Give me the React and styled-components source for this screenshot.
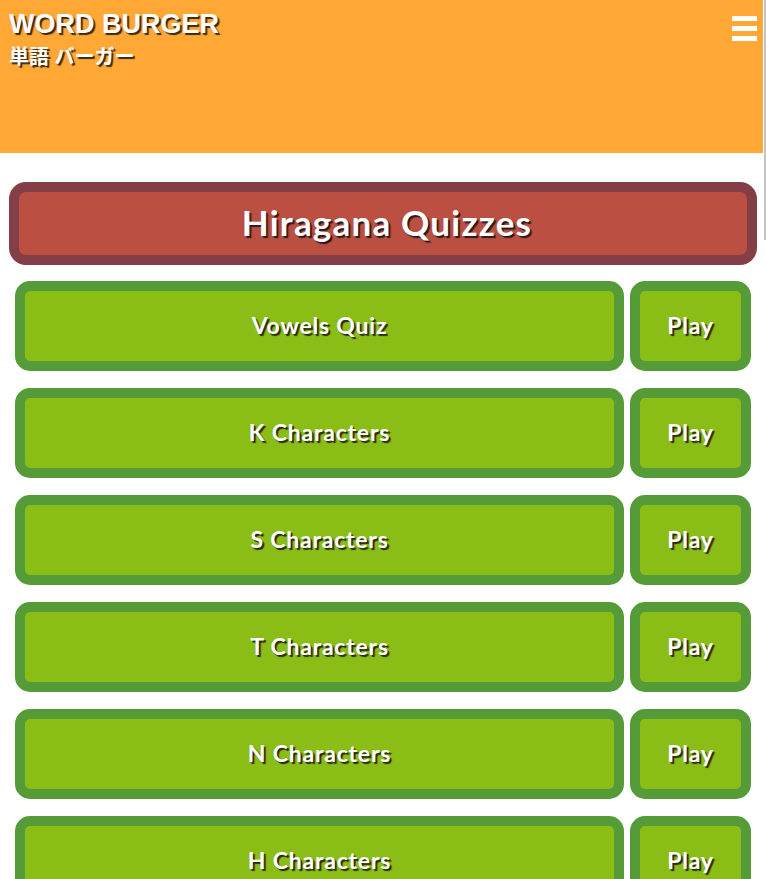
import React from "react";
import styled, { createGlobalStyle } from "styled-components";

const Global = createGlobalStyle`
  html, body { margin: 0; padding: 0; background: #ffffff; }
  body { font-family: "Liberation Sans", Arial, sans-serif; }
  * { box-sizing: border-box; }
`;

const Header = styled.header`
  height: 153px;
  width: 763px;
  background: #ffa836;
  display: flex;
  justify-content: space-between;
  align-items: flex-start;
  padding: 9px 6px 0 9px;
`;

const Brand = styled.div`
  display: flex;
  flex-direction: column;
  color: #ffffff;
  font-weight: 700;
  text-shadow: 2px 2px 1px #3a2a10;
`;

const Title = styled.div`
  font-family: "Liberation Sans", Arial, sans-serif;
  font-size: 27px;
  line-height: 30px;
`;

const Subtitle = styled.div`
  font-family: "Liberation Sans", "Noto Sans CJK JP", sans-serif;
  font-size: 20px;
  line-height: 26px;
  margin-top: 5px;
`;

const Burger = styled.button`
  display: flex;
  flex-direction: column;
  gap: 5px;
  margin-top: 7px;
  padding: 0;
  border: 0;
  background: transparent;
`;

const Bar = styled.span`
  display: block;
  width: 25px;
  height: 5px;
  background: #ffffff;
`;

const Main = styled.main`
  display: flex;
  flex-direction: column;
  padding: 29px 9px 0 9px;
  width: 766px;
`;

const Banner = styled.div`
  width: 748px;
  height: 83px;
  border: 10px solid #843f46;
  border-radius: 17px;
  background: #bb4f42;
  display: flex;
  align-items: center;
  justify-content: center;
  margin-bottom: 16px;
`;

const rounded = `"Comic Sans MS", "Lato", "DejaVu Sans", sans-serif`;

const BannerText = styled.h1`
  margin: 0;
  font-family: ${rounded};
  font-weight: 700;
  font-size: 35px;
  letter-spacing: 1.2px;
  color: #ffffff;
  text-shadow: 2px 2px 1px #2a1a1a;
  transform: translate(4px, -2px);
`;

const List = styled.div`
  display: flex;
  flex-direction: column;
  gap: 17px;
  padding: 0 6px;
`;

const Row = styled.div`
  display: flex;
  gap: 6px;
`;

const GreenBox = styled.div`
  height: 90px;
  width: ${(p) => p.$w}px;
  border: 10px solid #559b38;
  border-radius: 15px;
  background: #8abe17;
  display: flex;
  align-items: center;
  justify-content: center;
  padding-bottom: 2px;
  font-family: ${rounded};
  font-weight: 700;
  font-size: 23px;
  letter-spacing: 0.8px;
  color: #ffffff;
  text-shadow: 2px 2px 1px #2a2a10;
  cursor: pointer;
`;

const ScrollTrack = styled.div`
  position: fixed;
  top: 0;
  right: 0;
  width: 3px;
  height: 100%;
  background: #ffffff;
`;

const ScrollThumb = styled.div`
  margin-left: 1px;
  width: 2px;
  height: 240px;
  background: #c4c4c4;
`;

const quizzes = [
  "Vowels Quiz",
  "K Characters",
  "S Characters",
  "T Characters",
  "N Characters",
  "H Characters",
];

export default function App() {
  return (
    <>
      <Global />
      <Header>
        <Brand>
          <Title>WORD BURGER</Title>
          <Subtitle>単語 バーガー</Subtitle>
        </Brand>
        <Burger aria-label="menu">
          <Bar />
          <Bar />
          <Bar />
        </Burger>
      </Header>
      <Main>
        <Banner>
          <BannerText>Hiragana Quizzes</BannerText>
        </Banner>
        <List>
          {quizzes.map((q) => (
            <Row key={q}>
              <GreenBox $w={609}>{q}</GreenBox>
              <GreenBox $w={121}>Play</GreenBox>
            </Row>
          ))}
        </List>
      </Main>
      <ScrollTrack>
        <ScrollThumb />
      </ScrollTrack>
    </>
  );
}
